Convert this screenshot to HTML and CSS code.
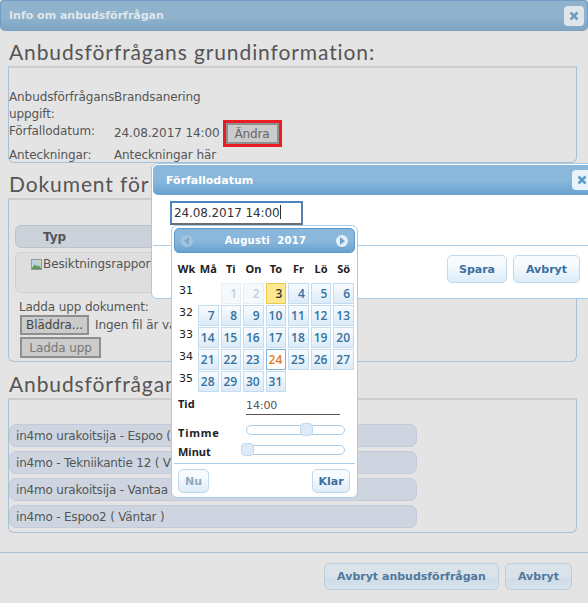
FILE: index.html
```html
<!DOCTYPE html>
<html lang="en">
<head>
    <meta charset="UTF-8">
    <meta name="viewport" content="width=device-width, initial-scale=1.0">
    <title>Info om anbudsförfrågan</title>
    <link rel="stylesheet" href="styles.css">
</head>
<body>
    <div class="dialog">
        <div class="dialog-bar">
            <span>Info om anbudsförfrågan</span>
            <span class="close-btn"><svg width="10" height="10" viewBox="0 0 10 10"><path d="M1.5 1.5l7 7M8.5 1.5l-7 7" stroke="#6f9dc0" stroke-width="2.6"/></svg></span>
        </div>

        <h2>Anbudsförfrågans grundinformation:</h2>
        <div class="box box-info">
            <div class="info-row row-task">
                <div class="info-label">Anbudsförfrågans uppgift:</div>
                <div>Brandsanering</div>
            </div>
            <div class="info-row row-date">
                <div class="info-label">Förfallodatum:</div>
                <div class="date-value">24.08.2017 14:00</div>
                <div class="highlight"><button class="gray-btn change-btn">Ändra</button></div>
            </div>
            <div class="info-row">
                <div class="info-label">Anteckningar:</div>
                <div>Anteckningar här</div>
            </div>
        </div>

        <h2>Dokument för</h2>
        <div class="box box-docs">
            <div class="doc-head">Typ</div>
            <div class="doc-row">
                <svg width="11" height="11" viewBox="0 0 11 11"><rect x="0.5" y="0.5" width="10" height="10" fill="#b9d3e4" stroke="#8c9aa3"/><path d="M1 9l3-3.5 2 2 1.5-1L10 9v1H1z" fill="#5f9a4e"/><circle cx="7.8" cy="3" r="1.4" fill="#e8d25a"/></svg>Besiktningsrapport
            </div>
            <div class="upload-label">Ladda upp dokument:</div>
            <div class="file-row">
                <button class="gray-btn file-btn">Bläddra...</button>
                <span>Ingen fil är va</span>
            </div>
            <button class="gray-btn upload-btn">Ladda upp</button>
        </div>

        <h2 class="third-head">Anbudsförfrågan</h2>
        <div class="box box-sent">
            <div class="sent-item">in4mo urakoitsija - Espoo (</div>
            <div class="sent-item">in4mo - Tekniikantie 12 ( V</div>
            <div class="sent-item">in4mo urakoitsija - Vantaa</div>
            <div class="sent-item">in4mo - Espoo2 ( Väntar )</div>
        </div>

        <div class="dialog-foot">
            <button class="dim-btn">Avbryt anbudsförfrågan</button>
            <button class="dim-btn">Avbryt</button>
        </div>
    </div>

    <div class="modal">
        <div class="modal-bar">
            <span>Förfallodatum</span>
            <span class="modal-close"><svg width="10" height="10" viewBox="0 0 10 10"><path d="M1.5 1.5l7 7M8.5 1.5l-7 7" stroke="#5f9bc9" stroke-width="2.6"/></svg></span>
        </div>
        <div class="modal-body">
            <div class="date-input">24.08.2017 14:00<span class="caret"></span></div>
        </div>
        <div class="modal-foot">
            <button class="blue-btn">Spara</button>
            <button class="blue-btn">Avbryt</button>
        </div>
    </div>

    <div class="picker">
        <div class="picker-head">
            <span class="nav nav-off"><svg width="6" height="8" viewBox="0 0 6 8"><path d="M5 0v8L0 4z" fill="#7fa6c6"/></svg></span>
            <span class="month">Augusti&nbsp; 2017</span>
            <span class="nav"><svg width="6" height="8" viewBox="0 0 6 8"><path d="M1 0v8l5-4z" fill="#6fa3cd"/></svg></span>
        </div>
        <table class="cal">
            <thead>
                <tr><th class="wk-head">Wk</th><th>Må</th><th>Ti</th><th>On</th><th>To</th><th>Fr</th><th>Lö</th><th>Sö</th></tr>
            </thead>
            <tbody>
                <tr><td class="wk">31</td><td></td><td><a class="off">1</a></td><td><a class="off">2</a></td><td><a class="today">3</a></td><td><a>4</a></td><td><a>5</a></td><td><a>6</a></td></tr>
                <tr><td class="wk">32</td><td><a>7</a></td><td><a>8</a></td><td><a>9</a></td><td><a>10</a></td><td><a>11</a></td><td><a>12</a></td><td><a>13</a></td></tr>
                <tr><td class="wk">33</td><td><a>14</a></td><td><a>15</a></td><td><a>16</a></td><td><a>17</a></td><td><a>18</a></td><td><a>19</a></td><td><a>20</a></td></tr>
                <tr><td class="wk">34</td><td><a>21</a></td><td><a>22</a></td><td><a>23</a></td><td><a class="picked">24</a></td><td><a>25</a></td><td><a>26</a></td><td><a>27</a></td></tr>
                <tr><td class="wk">35</td><td><a>28</a></td><td><a>29</a></td><td><a>30</a></td><td><a>31</a></td><td></td><td></td><td></td></tr>
            </tbody>
        </table>
        <div class="time-row">
            <span class="time-label">Tid</span>
            <span class="time-value">14:00</span>
        </div>
        <div class="slide-row">
            <span class="time-label spaced">Timme</span>
            <div class="track"><span class="handle handle-hour"></span></div>
        </div>
        <div class="slide-row">
            <span class="time-label">Minut</span>
            <div class="track track-min"><span class="handle handle-min"></span></div>
        </div>
        <div class="picker-foot">
            <button class="blue-btn small-btn now-btn">Nu</button>
            <button class="blue-btn small-btn">Klar</button>
        </div>
    </div>
</body>
</html>
```

FILE: styles.css
```css
* {
    box-sizing: border-box;
}
html, body {
    margin: 0;
    height: 603px;
    overflow: hidden;
}
body {
    position: relative;
    width: 588px;
    background-color: #e4e4e4;
    font-family: 'DejaVu Sans', sans-serif;
    font-size: 12px;
    letter-spacing: -0.1px;
    color: #555;
}
button {
    font-family: 'DejaVu Sans', sans-serif;
    font-size: 12px;
    letter-spacing: -0.1px;
}
.dialog-bar {
    display: flex;
    justify-content: space-between;
    align-items: center;
    height: 31px;
    padding: 0 3px 0 8px;
    border: 1px solid #6f9dc6;
    border-bottom-color: #7ba1c0;
    border-radius: 4px 4px 5px 5px;
    background: linear-gradient(#90b3cd 0%, #90b3cd 55%, #7ea5c3 100%);
    color: #dfe6ec;
    font-size: 11px;
    font-weight: bold;
    letter-spacing: 0;
}
.close-btn {
    display: flex;
    align-items: center;
    justify-content: center;
    width: 20px;
    height: 20px;
    border-radius: 4px;
    background-color: #dfe6eb;
}
h2 {
    margin: 0;
    padding-left: 9px;
    font-family: 'Lato', sans-serif;
    font-size: 21px;
    font-weight: 400;
    line-height: 28px;
    letter-spacing: 0.9px;
    color: #555;
    white-space: nowrap;
}
.box {
    width: 569px;
    margin-left: 8px;
    border: 1px solid #a9c1d6;
    border-top: 2px solid #cdcdcd;
    border-radius: 0 0 6px 6px;
}
.dialog-bar + h2 {
    margin-top: 7px;
}
.box-info {
    height: 97px;
    padding-top: 21px;
}
.info-row {
    display: flex;
    line-height: 17px;
}
.info-label {
    width: 105px;
    flex-shrink: 0;
}
.row-task {
    height: 34px;
}
.row-date {
    height: 24px;
}
.date-value {
    margin-top: 2px;
    line-height: 17px;
}
.highlight {
    display: flex;
    height: 27px;
    margin: -3px 0 0 3px;
    border: 3px solid #ec1c24;
}
.gray-btn {
    padding: 0;
    border: 2px solid #8f8f8f;
    background-color: #cbcbcb;
    color: #666;
}
.change-btn {
    width: 53px;
    height: 21px;
}
.box-info + h2 {
    margin-top: 7px;
}
.box-docs {
    height: 164px;
    padding: 25px 0 0 6px;
}
.doc-head {
    width: 420px;
    height: 23px;
    padding-left: 27px;
    border: 1px solid #bcc3cc;
    border-radius: 6px;
    background-color: #cbd2da;
    font-weight: bold;
    line-height: 22px;
}
.doc-row {
    width: 420px;
    height: 41px;
    margin-top: 4px;
    padding: 3px 0 0 15px;
    border: 1px solid #d0d0d0;
    border-radius: 6px;
    background-color: #dedede;
    line-height: 17px;
}
.doc-row svg {
    vertical-align: -2px;
    margin-right: 1px;
}
.upload-label {
    margin: 6px 0 0 4px;
    line-height: 17px;
}
.file-row {
    display: flex;
    align-items: center;
    gap: 6px;
    margin: -1px 0 0 5px;
    white-space: nowrap;
}
.file-btn {
    width: 69px;
    height: 20px;
    color: #444;
}
.upload-btn {
    display: block;
    width: 81px;
    height: 21px;
    margin: 2px 0 0 5px;
    color: #777;
}
.third-head {
    margin-top: 8px;
}
.box-sent {
    height: 135px;
    padding: 24px 0 0 0;
}
.sent-item {
    width: 408px;
    height: 23px;
    margin-bottom: 4px;
    padding-left: 6px;
    border: 1px solid #c2cbda;
    border-radius: 7px;
    background-color: #ced5e1;
    line-height: 22px;
    letter-spacing: -0.2px;
}
.dialog-foot {
    display: flex;
    justify-content: flex-end;
    gap: 6px;
    height: 52px;
    margin-top: 19px;
    padding: 10px 16px 0 0;
    border-top: 1px solid #a7c0d8;
}
.dim-btn {
    height: 27px;
    padding: 0;
    border: 1px solid #bccfdd;
    border-radius: 5px;
    background: linear-gradient(#dbe3ea 50%, #cfdde8 60%, #d8e2ea 100%);
    color: #50779c;
    font-size: 11px;
    font-weight: bold;
    letter-spacing: 0;
    white-space: nowrap;
}
.dim-btn:first-child {
    width: 175px;
}
.dim-btn:last-child {
    width: 67px;
}

/* date dialog on top */
.modal {
    position: absolute;
    left: 151px;
    top: 163px;
    width: 450px;
    height: 136px;
    padding: 1px;
    border: 1px solid #a6cbe8;
    border-radius: 6px;
    background-color: #fff;
}
.modal-bar {
    display: flex;
    justify-content: space-between;
    align-items: center;
    height: 30px;
    padding: 0 0 0 13px;
    border-radius: 5px;
    background: linear-gradient(#8ab8dc 0%, #8ab8dc 50%, #69a2cf 100%);
    color: #fff;
    font-size: 11px;
    font-weight: bold;
    letter-spacing: 0;
}
.modal-close {
    display: flex;
    align-items: center;
    justify-content: center;
    width: 20px;
    height: 20px;
    margin-right: 7px;
    border-radius: 4px;
    background-color: #eaf3fa;
}
.modal-body {
    height: 51px;
    padding: 6px 0 0 17px;
    border-bottom: 1px solid #a9cde8;
}
.date-input {
    width: 133px;
    height: 24px;
    padding-left: 2px;
    border: 2px solid #4d84c4;
    border-right-color: #5b7fa8;
    border-bottom-color: #6d6d6d;
    color: #333;
    line-height: 20px;
    white-space: nowrap;
}
.caret {
    display: inline-block;
    width: 1px;
    height: 14px;
    vertical-align: -2px;
    background-color: #333;
}
.modal-foot {
    display: flex;
    gap: 6px;
    padding: 9px 0 0 294px;
}
.blue-btn {
    width: 60px;
    height: 28px;
    padding: 0;
    border: 1px solid #c0d9ec;
    border-radius: 5px;
    background: linear-gradient(#f7fbfe 30%, #dcecf8 100%);
    color: #3a6f9f;
    font-size: 11px;
    font-weight: bold;
    letter-spacing: 0;
}
.blue-btn + .blue-btn {
    width: 67px;
}

/* calendar popup */
.picker {
    position: absolute;
    left: 171px;
    top: 225px;
    width: 187px;
    height: 273px;
    padding: 2px;
    border: 1px solid #a9cde8;
    border-radius: 6px;
    background-color: #fff;
}
.picker-head {
    display: flex;
    justify-content: space-between;
    align-items: center;
    height: 25px;
    padding: 0 6px;
    border: 1px solid #5f98c8;
    border-radius: 5px;
    background: linear-gradient(#8ab8dc 0%, #8ab8dc 50%, #69a2cf 100%);
    color: #fff;
    font-size: 10px;
    font-weight: bold;
    letter-spacing: 0;
}
.nav {
    display: flex;
    align-items: center;
    justify-content: center;
    width: 12px;
    height: 12px;
    border-radius: 50%;
    background-color: #e4eff8;
}
.nav-off {
    background-color: #a3c4df;
}
.month {
    margin-left: 2px;
    letter-spacing: 0.25px;
}
.cal {
    width: 181px;
    margin: 0 0 0 1px;
    border-collapse: separate;
    border-spacing: 2px 1px;
    table-layout: fixed;
}
.cal th {
    height: 28px;
    padding: 0;
    font-family: 'Noto Sans', sans-serif;
    font-size: 11px;
    font-weight: bold;
    letter-spacing: 0;
    color: #222;
}
.cal td {
    width: 20.7px;
    height: 21px;
    padding: 0;
    vertical-align: top;
}
.cal .wk {
    width: 19px;
    padding: 1px 0 0 2px;
    color: #222;
    font-size: 11px;
    line-height: 14px;
}
.cal .wk-head {
    width: 19px;
}
.cal a {
    display: block;
    height: 21px;
    padding-right: 3px;
    border: 1px solid #c4dcee;
    background: linear-gradient(#f8fbfe, #dcebf7);
    color: #35709f;
    font-family: 'Open Sans', sans-serif;
    font-size: 12px;
    font-weight: 600;
    letter-spacing: 0;
    line-height: 20px;
    text-align: right;
}
.cal a.off {
    border-color: #e6eff7;
    background: #f5f9fc;
    color: #c0cfdb;
}
.cal a.today {
    border-color: #ecc94a;
    background: #fbe88f;
    color: #333;
}
.cal a.picked {
    border-color: #7fb3dc;
    background: #fff;
    color: #e27a1c;
}
.time-row {
    display: flex;
    align-items: flex-start;
    height: 24px;
    margin-top: 3px;
    padding-left: 4px;
}
.time-label {
    width: 68px;
    color: #222;
    font-family: 'Noto Sans', sans-serif;
    font-size: 11px;
    font-weight: bold;
    letter-spacing: 0;
    line-height: 16px;
}
.spaced {
    letter-spacing: 0.8px;
}
.time-value {
    width: 94px;
    height: 19px;
    border-bottom: 1px solid #555;
    color: #555;
    font-size: 11px;
    line-height: 20px;
}
.slide-row {
    display: flex;
    align-items: flex-start;
    height: 19px;
    padding: 5px 0 0 4px;
}
.track {
    position: relative;
    width: 99px;
    height: 10px;
    border: 1px solid #a9cde8;
    border-radius: 5px;
    background-color: #fff;
}
.track-min {
    margin-top: 1px;
}
.handle {
    position: absolute;
    top: -3px;
    width: 13px;
    height: 13px;
    border: 1px solid #c0d9ec;
    border-radius: 4px;
    background: #dcebf7;
}
.handle-hour {
    left: 53px;
}
.handle-min {
    left: -6px;
}
.picker-foot {
    display: flex;
    justify-content: space-between;
    height: 31px;
    margin-top: 5px;
    padding: 5px 5px 0 4px;
    border-top: 1px solid #a9cde8;
}
.small-btn, .blue-btn + .small-btn {
    width: 38px;
    height: 24px;
}
.now-btn {
    width: 31px;
    color: #8fa9bf;
}
```
